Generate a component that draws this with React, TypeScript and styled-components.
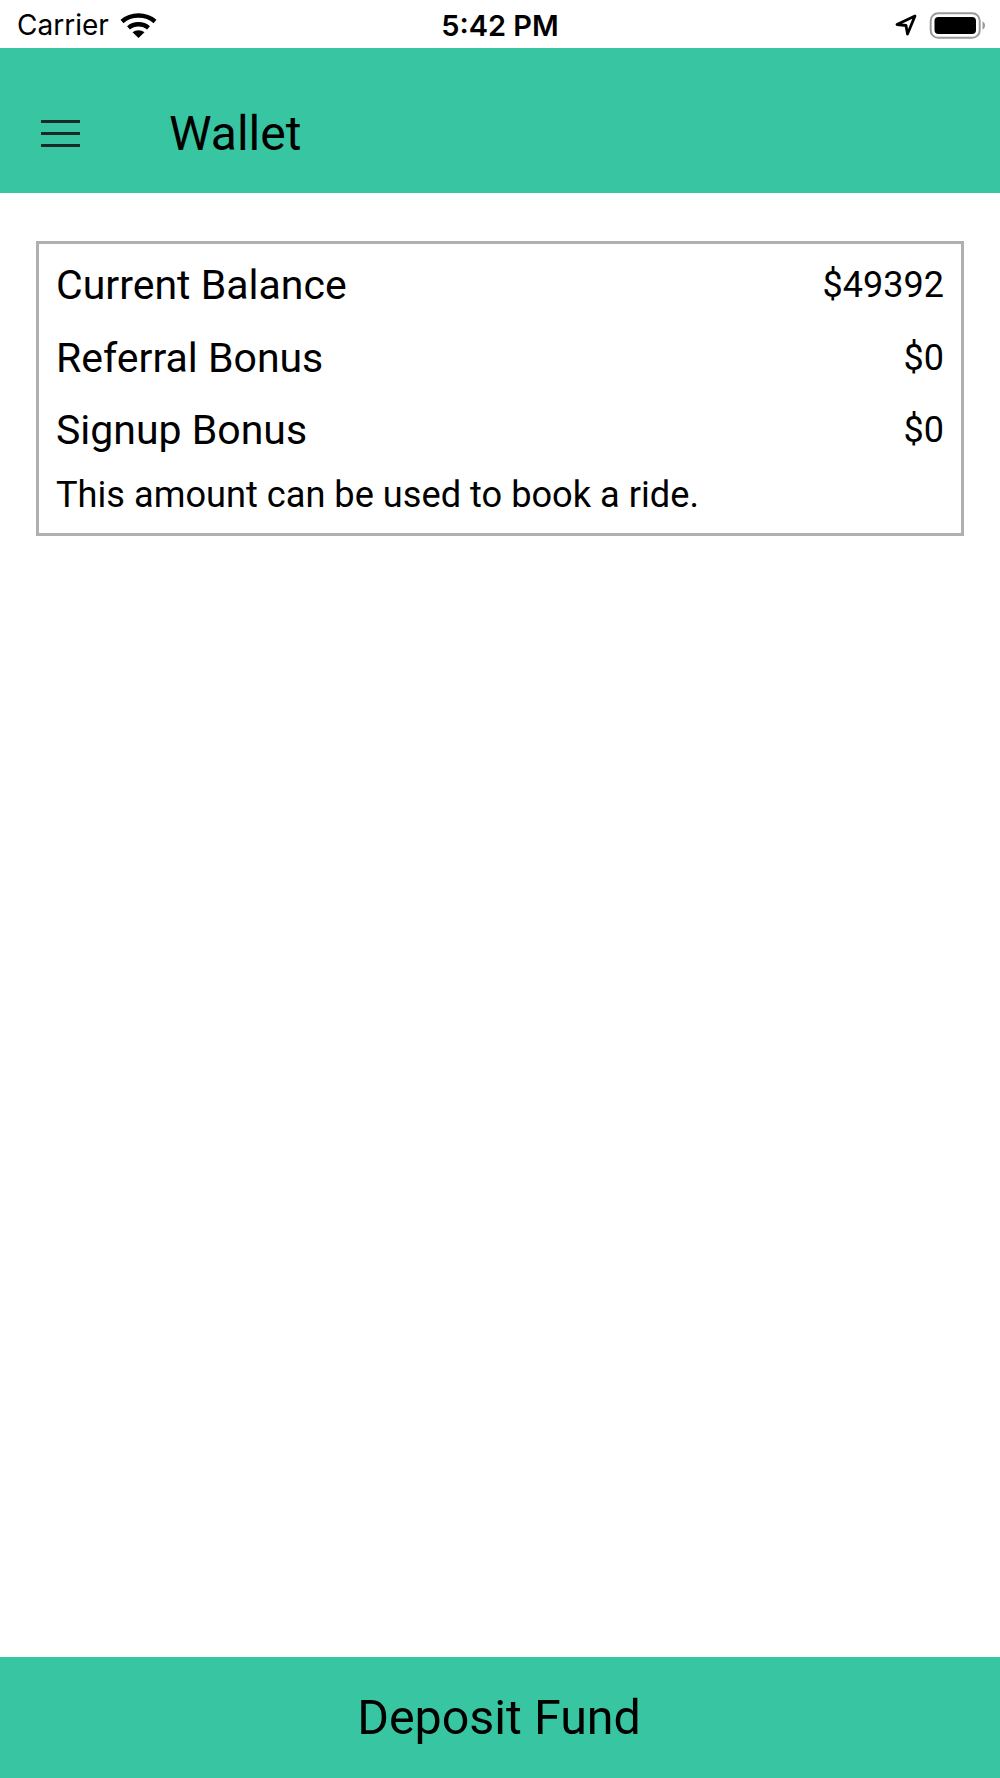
import React from "react";
import styled, { createGlobalStyle } from "styled-components";

const GlobalStyle = createGlobalStyle`
	html, body {
		margin: 0;
		padding: 0;
		background: #ffffff;
	}
`;

const Screen = styled.div`
	display: flex;
	flex-direction: column;
	width: 1000px;
	height: 1778px;
	background: #ffffff;
	color: #000000;
	font-family: Roboto, "Liberation Sans", sans-serif;
`;

const StatusBar = styled.div`
	display: grid;
	grid-template-columns: 1fr auto 1fr;
	align-items: center;
	height: 48px;
	padding: 2px 13px 0 17px;
	box-sizing: border-box;
	font-family: Inter, "Liberation Sans", sans-serif;
`;

const StatusLeft = styled.div`
	display: flex;
	align-items: center;
	gap: 11px;
	font-size: 28px;
	font-weight: 400;
`;

const StatusTime = styled.div`
	margin-right: 4px;
	font-size: 29px;
	font-weight: 600;
`;

const StatusRight = styled.div`
	display: flex;
	justify-content: flex-end;
	align-items: center;
	gap: 11px;
`;

const Header = styled.header`
	display: flex;
	align-items: center;
	height: 145px;
	box-sizing: border-box;
	padding: 25px 0 0 41px;
	background: #37c6a1;
`;

const MenuButton = styled.div`
	display: flex;
	flex-direction: column;
	gap: 9px;
	width: 39px;
	margin-right: 89px;
`;

const MenuLine = styled.span`
	display: block;
	height: 3px;
	background: #172a26;
`;

const Title = styled.h1`
	margin: 0;
	font-size: 48px;
	font-weight: 400;
`;

const Content = styled.main`
	flex: 1;
	padding: 48px 36px 0;
`;

const BalanceCard = styled.section`
	display: flex;
	flex-direction: column;
	height: 295px;
	box-sizing: border-box;
	padding: 5px 17px 0 17px;
	border: 3px solid #b0b0b0;
`;

const BalanceRow = styled.div`
	display: flex;
	justify-content: space-between;
	align-items: center;
	height: 72.5px;
	font-size: 41px;
`;

const Amount = styled.span`
	font-size: 36px;
`;

const Note = styled.p`
	margin: 0;
	font-size: 36.2px;
	line-height: 56px;
`;

const DepositButton = styled.button`
	display: block;
	width: 100%;
	height: 121px;
	padding: 0 2px 0 0;
	border: 0;
	background: #37c6a1;
	color: #000000;
	font-family: inherit;
	font-size: 48.4px;
	font-weight: 400;
`;

const WifiIcon = () => (
	<svg width="37" height="27" viewBox="0 0 36 27" fill="none">
		<path d="M1.5 9.5C10.5 1.5 25.5 1.5 34.5 9.5" stroke="#000" strokeWidth="4.4" />
		<path d="M8 15.8C13.5 11 22.5 11 28 15.8" stroke="#000" strokeWidth="4.4" />
		<path d="M12 20.3L18 26L24 20.3C20.5 17.4 15.5 17.4 12 20.3Z" fill="#000" />
	</svg>
);

const LocationIcon = () => (
	<svg width="22" height="22" viewBox="0 0 22 22" fill="none">
		<path d="M20 2L2 10.5L11 11.5L12.5 20Z" stroke="#000" strokeWidth="2.8" strokeLinejoin="round" />
	</svg>
);

const BatteryIcon = () => (
	<svg width="59" height="27" viewBox="0 0 56 27" fill="none">
		<rect x="1.2" y="1.2" width="49" height="24.6" rx="7.5" stroke="#9a9a9a" strokeWidth="2" />
		<rect x="5" y="5" width="41.5" height="17" rx="4" fill="#000" />
		<path d="M53 9.5C55 10.5 55.5 12 55.5 13.5C55.5 15 55 16.5 53 17.5Z" fill="#9a9a9a" />
	</svg>
);

const balances = [
	{ label: "Current Balance", amount: "$49392" },
	{ label: "Referral Bonus", amount: "$0" },
	{ label: "Signup Bonus", amount: "$0" },
];

export default function App() {
	return (
		<Screen>
			<GlobalStyle />
			<StatusBar>
				<StatusLeft>
					Carrier
					<WifiIcon />
				</StatusLeft>
				<StatusTime>5:42 PM</StatusTime>
				<StatusRight>
					<LocationIcon />
					<BatteryIcon />
				</StatusRight>
			</StatusBar>
			<Header>
				<MenuButton>
					<MenuLine />
					<MenuLine />
					<MenuLine />
				</MenuButton>
				<Title>Wallet</Title>
			</Header>
			<Content>
				<BalanceCard>
					{balances.map((item) => (
						<BalanceRow key={item.label}>
							<span>{item.label}</span>
							<Amount>{item.amount}</Amount>
						</BalanceRow>
					))}
					<Note>This amount can be used to book a ride.</Note>
				</BalanceCard>
			</Content>
			<DepositButton>Deposit Fund</DepositButton>
		</Screen>
	);
}
